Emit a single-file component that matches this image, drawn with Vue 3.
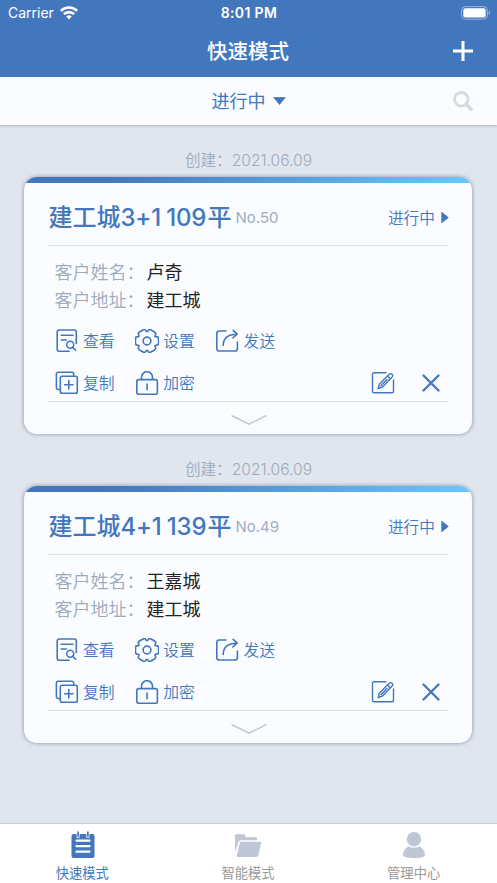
<script setup>
const cards = [
  { id: 50, title: ['建工城', '3+1 109', '平'], name: '卢奇', address: '建工城' },
  { id: 49, title: ['建工城', '4+1 139', '平'], name: '王嘉城', address: '建工城' }
]

// Six-lobed gear outline with softened corners.
function gearPath() {
  const pts = []
  for (let k = 0; k < 6; k++) {
    for (const [a, r] of [[-19, 12.2], [19, 12.2], [30, 8.8]]) {
      const t = ((k * 60 + a) * Math.PI) / 180
      pts.push([12 + r * Math.cos(t), 12 + r * Math.sin(t)])
    }
  }
  const mix = (p, q, f) => `${(p[0] + (q[0] - p[0]) * f).toFixed(2)} ${(p[1] + (q[1] - p[1]) * f).toFixed(2)}`
  return pts.map((p, i) => {
    const prev = pts[(i + pts.length - 1) % pts.length]
    const next = pts[(i + 1) % pts.length]
    return `${i ? 'L' : 'M'}${mix(p, prev, 0.3)}Q${p[0].toFixed(2)} ${p[1].toFixed(2)} ${mix(p, next, 0.3)}`
  }).join('') + 'Z'
}
const gear = gearPath()
</script>

<template>
  <div class="screen">
    <header class="top">
      <div class="status">
        <div class="carrier">
          <span>Carrier</span>
          <svg width="18" height="14" viewBox="0 0 18 14" fill="none" stroke="#fff" stroke-width="2.6">
            <path d="M.9 4.9a11.5 11.5 0 0 1 16.2 0" />
            <path d="M3.9 8.2a7.2 7.2 0 0 1 10.2 0" />
            <path d="M9 13.4 6.2 10.6a4 4 0 0 1 5.6 0z" fill="#fff" stroke="none" />
          </svg>
        </div>
        <div class="time">8:01 PM</div>
        <div class="battery">
          <svg width="30" height="14" viewBox="0 0 30 14">
            <rect x=".6" y=".6" width="25.8" height="12.6" rx="3.8" fill="none" stroke="#fff" stroke-opacity=".45" />
            <rect x="2.3" y="2.3" width="22.4" height="9.2" rx="2.2" fill="#fff" />
            <path d="M27.8 4.8c1.7.6 1.7 3.6 0 4.2z" fill="#fff" fill-opacity=".5" />
          </svg>
        </div>
      </div>
      <div class="nav">
        <span></span>
        <h1>快速模式</h1>
        <svg width="20" height="20" viewBox="0 0 20 20" stroke="#fff" stroke-width="3"><path d="M0 10h20M10 0v20" /></svg>
      </div>
    </header>

    <div class="filter">
      <span></span>
      <div class="current">
        <span>进行中</span>
        <svg width="13" height="8" viewBox="0 0 13 8"><path d="M.8.5h11.4L6.5 7.5z" fill="#4377bd" stroke="#4377bd" stroke-width=".8" stroke-linejoin="round" /></svg>
      </div>
      <svg class="search" width="20" height="20" viewBox="0 0 20 20" fill="none" stroke="#d3dae5" stroke-width="2.8">
        <circle cx="8.3" cy="8.3" r="6.8" /><path d="m13.2 13.2 5 5" stroke-width="3.4" stroke-linecap="round" />
      </svg>
    </div>

    <main>
      <section v-for="c in cards" :key="c.id">
        <div class="created">创建：<span>2021.06.09</span></div>
        <article class="card">
          <div class="stripe"></div>
          <div class="head">
            <h2>{{ c.title[0] }}<span>{{ c.title[1] }}</span>{{ c.title[2] }}</h2>
            <span class="no">No.{{ c.id }}</span>
            <div class="state">
              <span>进行中</span>
              <svg width="8" height="13" viewBox="0 0 8 13"><path d="M.3.5v12L7.8 6.5z" fill="#4377bd" /></svg>
            </div>
          </div>
          <dl>
            <div><dt>客户姓名：</dt><dd>{{ c.name }}</dd></div>
            <div><dt>客户地址：</dt><dd>{{ c.address }}</dd></div>
          </dl>
          <div class="actions">
            <div class="action">
              <svg class="icon" viewBox="0 0 24 24">
                <path d="M14.2 22.2H4.2a2 2 0 0 1-2-2V3a2 2 0 0 1 2-2h15.1a2 2 0 0 1 2 2v11.4M6.2 6.2H18M6.2 11h5.2M17.6 18.2l3 3" />
                <circle cx="15.2" cy="15.7" r="3.5" />
              </svg>
              <span>查看</span>
            </div>
            <div class="action">
              <svg class="icon" viewBox="0 0 24 24"><path :d="gear" /><circle cx="12" cy="12" r="3.9" /></svg>
              <span>设置</span>
            </div>
            <div class="action">
              <svg class="icon" viewBox="0 0 24 24">
                <path d="M11 2H4a2.2 2.2 0 0 0-2.2 2.2v15.6A2.2 2.2 0 0 0 4 22h16.2a2.2 2.2 0 0 0 2.2-2.2V13" />
                <path d="M8.2 16.5C8.2 9.5 11.5 5.2 22 5.2M18.2 1.4 22.2 5.2 17.8 9" />
              </svg>
              <span>发送</span>
            </div>
          </div>
          <div class="actions second">
            <div class="action">
              <svg class="icon" viewBox="0 0 24 24">
                <path d="M18.7 5V3a1.8 1.8 0 0 0-1.8-1.8H3.2A1.8 1.8 0 0 0 1.4 3v13.7a1.8 1.8 0 0 0 1.8 1.8H5.3" />
                <rect x="5.3" y="5.2" width="17" height="17" rx="1.8" />
                <path d="M13.8 9.5v8.4M9.6 13.7h8.4" />
              </svg>
              <span>复制</span>
            </div>
            <div class="action">
              <svg class="icon" viewBox="0 0 24 24">
                <rect x="1.8" y="8.6" width="20.6" height="14.6" rx="2" />
                <path d="M6.5 8.500V6.2a5.500 5.500 0 0 1 11 0v2.300M12.100 13v5.800" />
              </svg>
              <span>加密</span>
            </div>
            <div class="tools">
              <svg class="icon thin" viewBox="0 0 24 24">
                <path d="M15 1.800H3a1.500 1.500 0 0 0-1.500 1.500v17A1.500 1.500 0 0 0 3 21.800h18a1.500 1.500 0 0 0 1.500-1.500V9" />
                <path d="M7.200 17.500 8.300 13.300 18.200 3.200a2 2 0 0 1 2.900 0 2 2 0 0 1 0 2.900L11.300 16.200zM16.500 5l2.900 2.900M10 14.800l6-6.200" />
              </svg>
              <svg class="close" width="18" height="18" viewBox="0 0 18 18"><path d="m1.500 1.500 15 15m0-15-15 15" /></svg>
            </div>
          </div>
          <div class="expand">
            <svg width="38" height="12" viewBox="0 0 38 12"><path d="M1.500 1.500 19 10.200 36.500 1.500" fill="none" stroke="#bfc8d6" stroke-width="1.500" /></svg>
          </div>
        </article>
      </section>
    </main>

    <footer>
      <div class="tab active">
        <svg width="28" height="28" viewBox="0 0 28 28">
          <path d="M4.500 3h3v2.500a1.600 1.600 0 0 0 3.200 0V3h6.600v2.500a1.600 1.600 0 0 0 3.200 0V3h3Q25.500 3 25.500 5v20q0 2-2 2h-19q-2 0-2-2V5q0-2 2-2z" fill="#4377bd" />
          <path d="M9.100 1v4.300M18.900 1v4.300" stroke="#4377bd" stroke-width="1.700" stroke-linecap="round" />
          <path d="M7.500 9.700h13M7.500 15.200h13M7.500 20.700h13" stroke="#fff" stroke-width="2.200" stroke-linecap="round" />
        </svg>
        <span>快速模式</span>
      </div>
      <div class="tab">
        <svg width="28" height="28" viewBox="0 0 28 28" fill="#bfc7d6">
          <path d="M1 21V4.500q0-1.200 1.200-1.200h8q1.300 0 1.300 1.200v1.700h10.400q1.200 0 1.200 1.200v1.800H6.800q-1.800 0-2.200 1.800z" />
          <path d="m2.700 25 3.100-12.900q.3-1.300 1.700-1.300h18.800q1.200 0 .9 1.300l-2.900 12.200q-.5 1.700-2 1.700H3.500q-1 0-.8-1z" />
        </svg>
        <span>智能模式</span>
      </div>
      <div class="tab">
        <svg width="28" height="28" viewBox="0 0 28 28" fill="#bfc7d6">
          <path d="M8.700 15.200Q14 18.200 19.300 15.200C22.500 16.500 25 21 25 24.300 25 26 20 27.200 14 27.200S3 26 3 24.300C3 21 5.500 16.500 8.700 15.200z" />
          <circle cx="14" cy="8.200" r="7.200" />
        </svg>
        <span>管理中心</span>
      </div>
    </footer>
  </div>
</template>

<style>
body { margin: 0; }
</style>

<style scoped>
.screen {
  width: 497px;
  height: 883px;
  display: flex;
  flex-direction: column;
  overflow: hidden;
  background: #e1e6ee;
  font-family: Inter, "Noto Sans CJK SC", sans-serif;
  color: #4377bd;
}
svg { display: block; flex: none; }
h1, h2, dl, dd { margin: 0; }
.top { height: 77px; background: #4377bd; color: #fff; flex: none; }
.status {
  height: 26px;
  display: grid;
  grid-template-columns: 1fr auto 1fr;
  align-items: center;
  padding: 0 7px 0 8px;
  font-size: 14px;
  line-height: 26px;
}
.carrier { display: flex; align-items: center; gap: 6px; }
.carrier svg { margin-top: -1px; }
.time { font-weight: 600; letter-spacing: .350px; }
.battery { display: flex; justify-content: flex-end; margin-right: -1px; }
.nav, .filter {
  display: grid;
  grid-template-columns: 1fr auto 1fr;
  align-items: center;
  padding: 0 24px;
}
.nav { height: 49px; }
.nav svg, .search { justify-self: end; }
h1 { font-size: 20.500px; font-weight: 500; line-height: 30px; padding-top: 2px; margin-left: -1px; }
.filter {
  height: 48px;
  flex: none;
  background: #fafcff;
  box-shadow: 0 1px 3px rgba(90, 105, 135, .4);
}
.current { display: flex; align-items: center; gap: 7px; font-size: 18px; line-height: 26px; }
.current span { padding-top: 2px; }
main { flex: 1; padding-top: 22px; }
.created {
  height: 29px;
  padding-top: 1px;
  line-height: 26px;
  text-align: center;
  font-size: 15.600px;
  font-weight: 350;
  color: #9daabd;
}
.card {
  height: 257px;
  margin: 0 25.500px 22px 24px;
  border-radius: 13px;
  overflow: hidden;
  background: #fafcff;
  box-shadow: 0 0 4px rgba(75, 95, 130, .65);
}
.stripe { height: 6px; background: linear-gradient(90deg, #4377bd 18%, #68c7ff); }
.head {
  height: 56px;
  padding-top: 6px;
  margin: 0 22.500px 0 24px;
  display: flex;
  align-items: center;
  border-bottom: 1px solid #dce3ec;
}
h2 { font-size: 24px; line-height: 36px; font-weight: 500; white-space: nowrap; padding: 2px 0 0 .500px; }
h2 span { display: inline-block; width: 87px; letter-spacing: -.200px; word-spacing: -1px; white-space: pre; }
.no { margin-left: 4px; font-size: 15px; color: #a0adbf; }
.state { margin-left: auto; display: flex; align-items: center; gap: 6px; font-size: 15.700px; font-weight: 350; }
dl { margin: 13px 0 0 30.500px; font-size: 18px; line-height: 27.600px; }
dl div { display: flex; }
dt { color: #9daabd; width: 92px; font-weight: 350; }
dd { color: #222; }
.actions { display: flex; height: 24px; margin: 15px 23px 0 30.500px; }
.actions.second { margin-top: 18px; }
.action { width: 80.300px; display: flex; align-items: center; gap: 4.500px; font-size: 15.800px; line-height: 24px; font-weight: 350; }
.action span { padding-top: 2px; }
.icon { width: 24px; height: 24px; fill: none; stroke: #4377bd; stroke-width: 1.600; stroke-linecap: round; stroke-linejoin: round; }
.icon.thin { stroke-width: 1.400; }
.tools { margin-left: auto; display: flex; align-items: center; gap: 27px; padding-right: 9px; }
.close { stroke: #4377bd; stroke-width: 2.300; stroke-linecap: round; }
.expand {
  margin: 6px 22.500px 0 24px;
  border-top: 1px solid #dce3ec;
  padding-top: 12px;
  display: flex;
  justify-content: center;
}
footer {
  height: 59px;
  flex: none;
  display: grid;
  grid-template-columns: repeat(3, 1fr);
  background: #fff;
  border-top: 1px solid #c6cfdd;
}
.tab { display: flex; flex-direction: column; align-items: center; padding-top: 7px; color: #999; font-size: 13.300px; line-height: 20px; gap: 4px; }
.tab.active { color: #4377bd; }
.tab span { margin-left: -1px; }
</style>
